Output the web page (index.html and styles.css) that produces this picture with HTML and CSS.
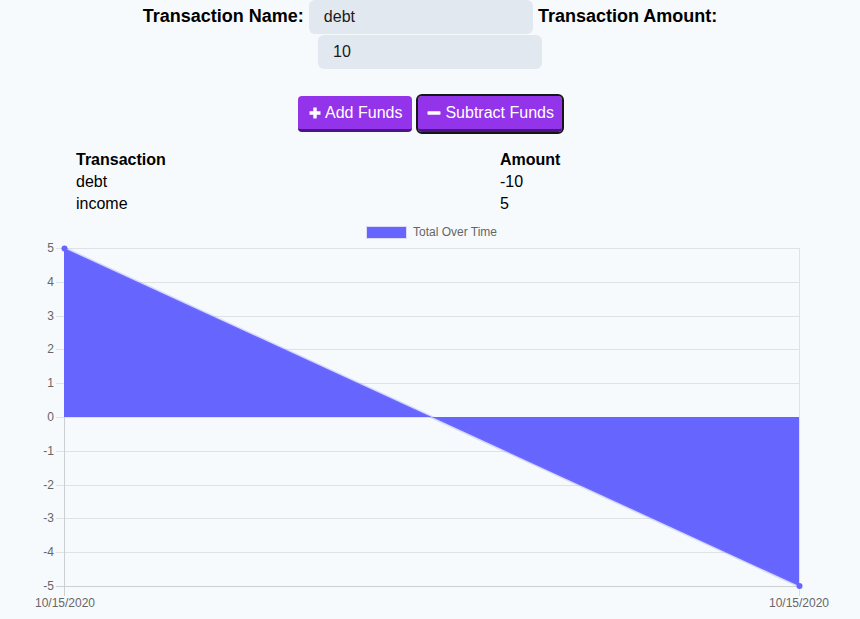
FILE: index.html
```html
<!DOCTYPE html>
<html>
<head>
<meta charset="utf-8">
<link rel="stylesheet" href="styles.css">
</head>
<body>
<form class="entry">
  <label class="field-label">Transaction Name:</label> <input class="field" type="text" value="debt"> <label class="field-label">Transaction Amount:</label> <input class="field" type="text" value="10">
</form>
<div class="actions">
  <button class="btn" type="button"><svg class="ico" width="12" height="12" viewBox="0 0 12 12"><path d="M4.3 0.5h3.4v3.8h3.8v3.4H7.7v3.8H4.3V7.7H0.5V4.3h3.8z" fill="#fff"/></svg>Add Funds</button>
  <button class="btn btn-focus" type="button"><svg class="ico" width="14" height="12" viewBox="0 0 14 12"><rect x="0.5" y="4.3" width="13" height="3.4" rx="0.6" fill="#fff"/></svg>Subtract Funds</button>
</div>
<table class="tx">
  <thead><tr><th class="col-name">Transaction</th><th>Amount</th></tr></thead>
  <tbody>
    <tr><td>debt</td><td>-10</td></tr>
    <tr><td>income</td><td>5</td></tr>
  </tbody>
</table>
<svg class="chart" width="860" height="404" viewBox="0 0 860 404">
  <g class="legend">
    <rect x="366.5" y="11.5" width="40" height="12" fill="#6666ff" stroke="#dcdcf7" stroke-width="1"/>
    <text x="413" y="21">Total Over Time</text>
  </g>
  <g stroke="#dfe2e4" stroke-width="1">
    <line x1="56" y1="33.5" x2="800" y2="33.5"/>
    <line x1="56" y1="67.5" x2="800" y2="67.5"/>
    <line x1="56" y1="101.5" x2="800" y2="101.5"/>
    <line x1="56" y1="134.5" x2="800" y2="134.5"/>
    <line x1="56" y1="168.5" x2="800" y2="168.5"/>
    <line x1="56" y1="202.5" x2="800" y2="202.5"/>
    <line x1="56" y1="236.5" x2="800" y2="236.5"/>
    <line x1="56" y1="270.5" x2="800" y2="270.5"/>
    <line x1="56" y1="303.5" x2="800" y2="303.5"/>
    <line x1="56" y1="337.5" x2="800" y2="337.5"/>
    <line x1="799.5" y1="33" x2="799.5" y2="381"/>
  </g>
  <g stroke="#cdd0d2" stroke-width="1">
    <line x1="56" y1="371.5" x2="800" y2="371.5"/>
    <line x1="64.5" y1="33" x2="64.5" y2="381"/>
  </g>
  <polygon points="64,202 64,33 799,371 799,202" fill="#6666ff"/>
  <polyline points="64,33 799,371" fill="none" stroke="rgba(120,120,255,0.25)" stroke-width="3"/>
  <circle cx="64.5" cy="33.5" r="3" fill="#6666ff"/>
  <circle cx="799.5" cy="371" r="3" fill="#6666ff"/>
  <g class="ytick">
    <text x="54" y="37">5</text>
    <text x="54" y="71">4</text>
    <text x="54" y="105">3</text>
    <text x="54" y="138">2</text>
    <text x="54" y="172">1</text>
    <text x="54" y="206">0</text>
    <text x="54" y="240">-1</text>
    <text x="54" y="274">-2</text>
    <text x="54" y="307">-3</text>
    <text x="54" y="341">-4</text>
    <text x="54" y="375">-5</text>
  </g>
  <g class="xtick">
    <text x="65" y="392">10/15/2020</text>
    <text x="799" y="392">10/15/2020</text>
  </g>
</svg>
</body>
</html>
```

FILE: styles.css
```css
html, body {
  margin: 0;
  padding: 0;
  background: #f7fafc;
  font-family: "Liberation Sans", Arial, sans-serif;
  color: #000;
}

.entry {
  max-width: 780px;
  margin: 0 auto;
  text-align: center;
  line-height: 35px;
  font-size: 18px;
}

.field-label {
  font-weight: bold;
  font-size: 18px;
  vertical-align: top;
  line-height: 33px;
}

.field {
  display: inline-block;
  vertical-align: top;
  box-sizing: border-box;
  width: 224px;
  height: 34px;
  margin: 0;
  border: none;
  border-radius: 6px;
  background: #e2e8f0;
  padding: 0 15px;
  font-family: "Liberation Sans", Arial, sans-serif;
  font-size: 16px;
  color: #1a1a1a;
  outline: none;
}

.actions {
  display: flex;
  justify-content: center;
  gap: 6px;
  margin-top: 26px;
}

.btn {
  display: flex;
  align-items: center;
  gap: 4px;
  box-sizing: border-box;
  height: 36px;
  padding: 0 10px 0 11px;
  border: none;
  border-bottom: 3px solid #4a1685;
  border-radius: 4px;
  background: #9333ea;
  color: #fff;
  font-family: "Liberation Sans", Arial, sans-serif;
  font-size: 16px;
  cursor: pointer;
}

.ico {
  display: block;
  flex: none;
}

.btn-focus {
  padding: 0 8px 0 9px;
  outline: 2px solid #161616;
  outline-offset: 0;
}

.tx {
  margin: 17px 0 0 76px;
  border-collapse: collapse;
  font-size: 16px;
  line-height: 22px;
  text-align: left;
}

.tx th, .tx td {
  padding: 0;
}

.tx th {
  font-weight: bold;
}

.col-name {
  width: 424px;
}

.chart {
  display: block;
}

.chart text {
  font-family: "Liberation Sans", Arial, sans-serif;
  font-size: 12px;
  fill: #666;
}

.ytick text {
  text-anchor: end;
}

.xtick text {
  text-anchor: middle;
}
```
